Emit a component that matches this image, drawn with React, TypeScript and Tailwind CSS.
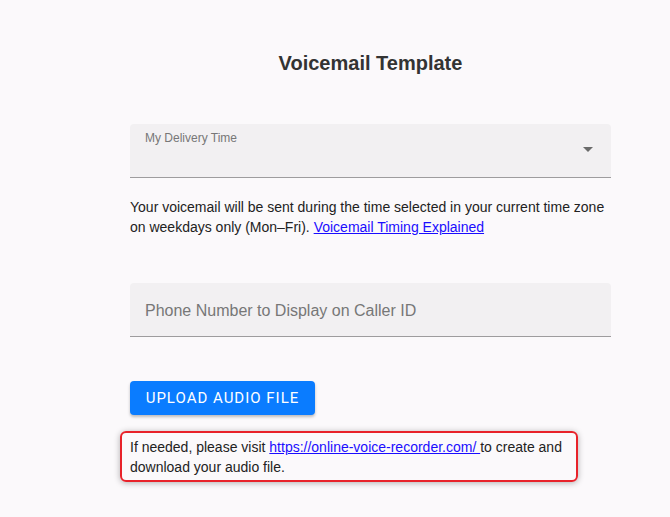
import React from "react";

export default function App() {
  return (
    <div className="min-h-[517px] w-full bg-[#fbf9fb] text-[#333]" style={{ fontFamily: '"Liberation Sans", Arial, sans-serif' }}>
      <div className="pl-[130px] pt-[51px] w-[611px]">
        <h1 className="text-center text-[20px] font-bold leading-[24px] text-[#333]">Voicemail Template</h1>

        <div className="mt-[49px] relative h-[54px] rounded-t-[4px] bg-[#f2f0f2] border-b border-[#9e9c9e]">
          <div className="absolute left-[15px] top-[7px] text-[12px] leading-[14px] text-[#777]">My Delivery Time</div>
          <svg className="absolute right-[18px] top-[23px]" width="10" height="5" viewBox="0 0 10 5">
            <path d="M0 0 L10 0 L5 5 Z" fill="#6b6b6b" />
          </svg>
        </div>

        <p className="mt-[19px] text-[14px] leading-[20px] text-[#222]">
          Your voicemail will be sent during the time selected in your current time zone on weekdays only (Mon–Fri).{" "}
          <a href="#" className="text-[#1a0dff] underline">Voicemail Timing Explained</a>
        </p>

        <div className="mt-[46px] relative h-[54px] rounded-t-[4px] bg-[#f2f0f2] border-b border-[#9e9c9e] flex items-center">
          <span className="pl-[15px] text-[16px] text-[#777] pt-[2px]">Phone Number to Display on Caller ID</span>
        </div>

        <button className="mt-[44px] h-[34px] w-[185px] rounded-[4px] bg-[#0a7cff] text-white text-[15px] font-normal tracking-[1px] shadow-[0_2px_3px_rgba(0,0,0,0.25)]" style={{ fontFamily: 'Roboto, "Liberation Sans", sans-serif' }}>
          UPLOAD AUDIO FILE
        </button>

        <div className="mt-[16px] -ml-[10px] w-[458px] rounded-[6px] border-2 border-[#e8222a] px-[8px] pt-[4px] pb-[3px] text-[14px] leading-[20px] text-[#222] shadow-[0_1px_6px_rgba(0,0,0,0.3)]">
          If needed, please visit{" "}
          <a href="#" className="text-[#1a0dff] underline">https://online-voice-recorder.com/ </a>
          to create and download your audio file.
        </div>
      </div>
    </div>
  );
}
